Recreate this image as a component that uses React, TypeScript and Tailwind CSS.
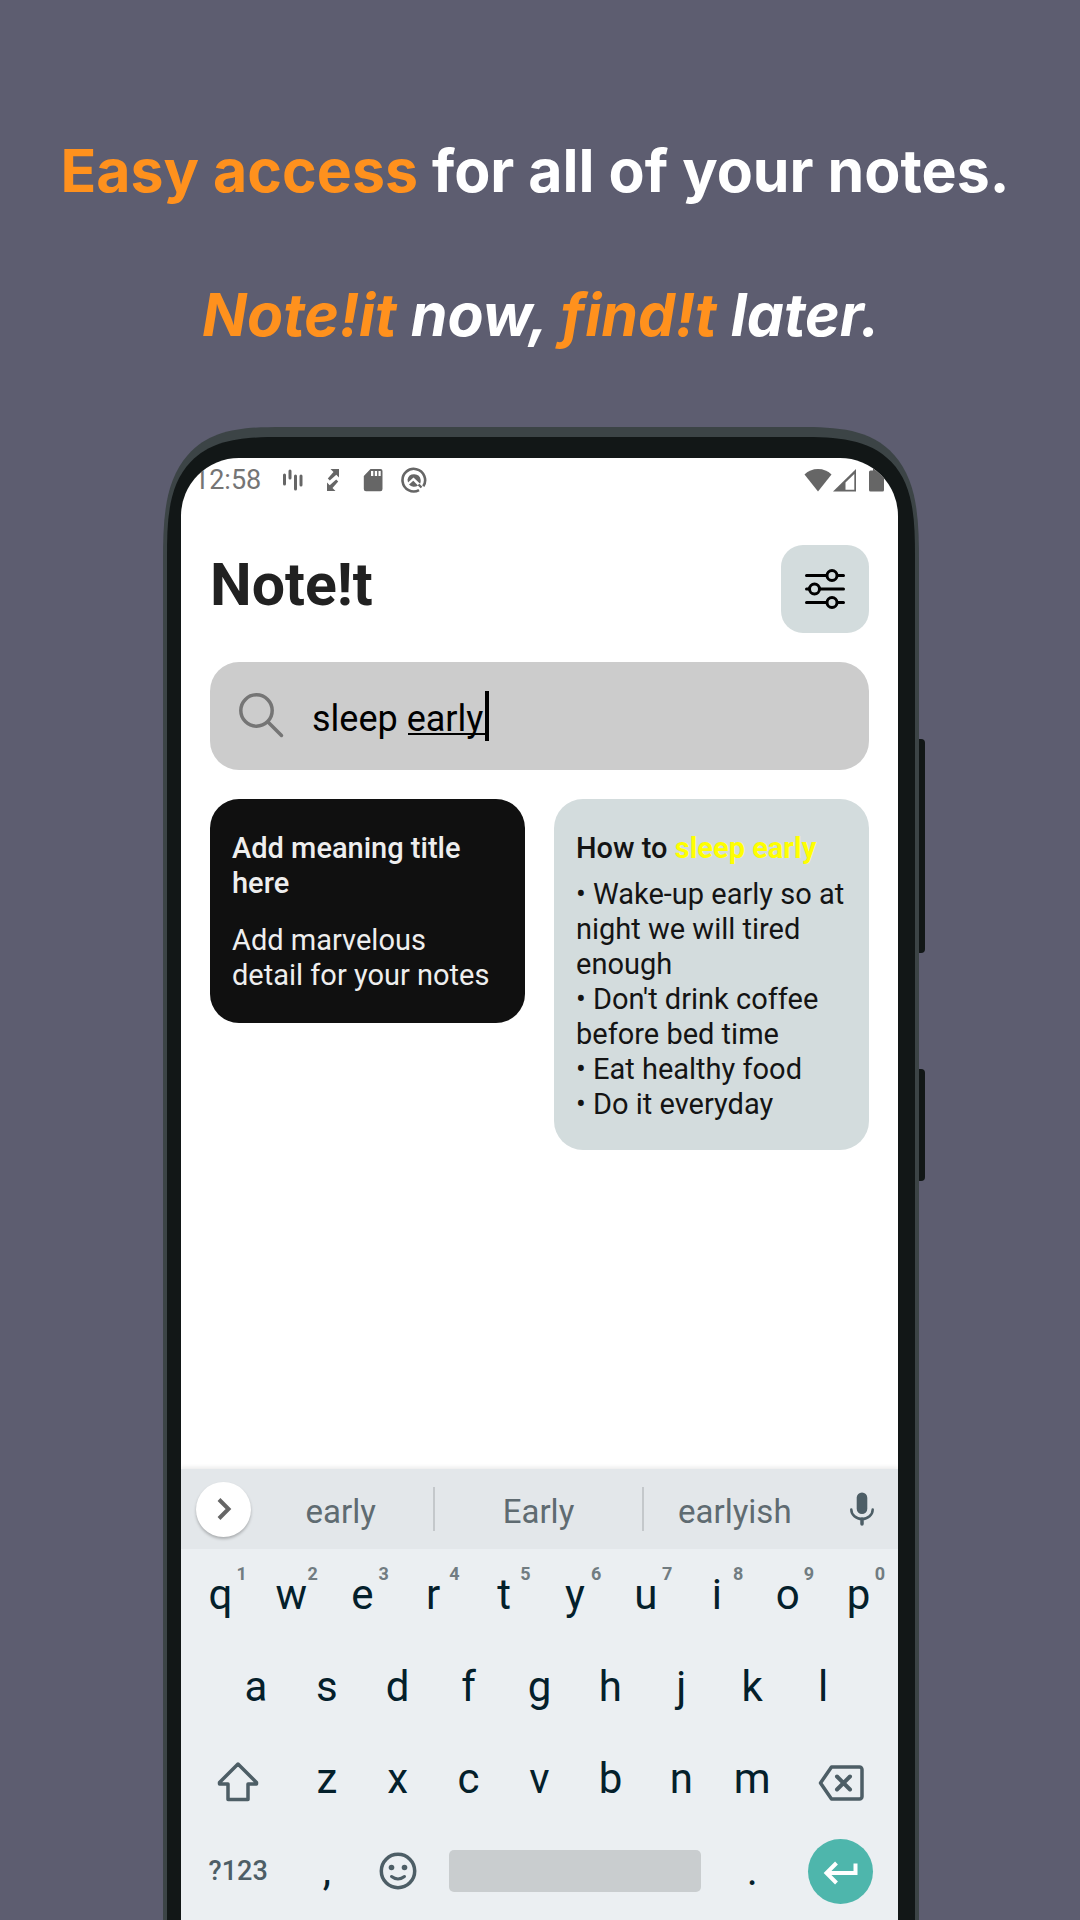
import type { ReactNode } from "react";

const numberRow = [
  ["q", "1"], ["w", "2"], ["e", "3"], ["r", "4"], ["t", "5"],
  ["y", "6"], ["u", "7"], ["i", "8"], ["o", "9"], ["p", "0"],
];

function Headline() {
  return (
    <h1 className="mx-auto flex flex-col gap-[72px] text-center font-['Inter',sans-serif] text-[59px] leading-[72px] font-bold whitespace-pre text-white">
      <span>
        <span className="text-[#ff911d]">Easy access</span> for all of your notes.{" "}
      </span>
      <em>
        <span className="text-[#ff911d]">Note!it</span> now, <span className="text-[#ff911d]">find!t</span> later.
      </em>
    </h1>
  );
}

function StatusBar() {
  return (
    <div className="flex h-11 items-center justify-between pr-[14px] pl-[13px] text-[#666666]">
      <div className="flex items-center gap-4">
        <span className="mr-1 text-[27px] leading-8 text-[#757575]">12:58</span>
        <svg className="h-6 w-6" viewBox="0 0 24 24" stroke="currentColor" strokeWidth="3" strokeLinecap="round" fill="none">
          <path d="M3.500 7v9M9 3v7M14.500 8v13M20 8v9" />
        </svg>
        <svg className="h-6 w-6" viewBox="0 0 24 24" fill="currentColor">
          <path d="M9.500 1h8.500v8.500l-2.700-2.700-6.500 5.700-2-2 5.700-6.500zM14.500 23H6v-8.500l2.700 2.700 6.500-5.700 2 2-5.700 6.500z" />
        </svg>
        <svg className="h-6 w-6" viewBox="0 0 24 24" fill="currentColor">
          <path fillRule="evenodd" d="M9.500 1H19.500a2 2 0 0 1 2 2V21a2.200 2.200 0 0 1-2.200 2.200H5a2.200 2.200 0 0 1-2.200-2.200V8zM10 3v5h2.300V3zM13.800 3v5h2.300V3zM17.500 3v5h2.200V3z" />
        </svg>
        <svg className="h-[26px] w-[26px]" viewBox="0 0 26 26" fill="none" stroke="currentColor">
          <path d="M18 23.200A11.300 11.300 0 1 1 22.300 19.300" strokeWidth="2.600" />
          <path d="M6.500 12.500a6.700 6.700 0 0 1 13.200 0.500c.100 1.300 0 2.500-.600 3.800l-6.600-6.300-5.500 5z" fill="currentColor" stroke="none" />
          <path d="M8 17.500l4.300-3.800 4.700 4.700A6.900 6.900 0 0 1 8 17.500z" fill="currentColor" stroke="none" />
          <path d="M17.500 17.500l3 3" strokeWidth="2.400" />
        </svg>
      </div>
      <div className="flex items-center">
        <svg className="h-6 w-7" viewBox="0 0 28 24" fill="currentColor">
          <path d="M14 23.500L.5 6.500Q6 1 14 1t13.500 5.500z" />
        </svg>
        <svg className="ml-px h-6 w-6" viewBox="0 0 24 24">
          <path d="M0 23.500L23 1v22.500z" fill="currentColor" />
          <path d="M12.500 14.500L21.300 6v15.800h-8.800z" fill="#fff" />
        </svg>
        <svg className="ml-3 h-6 w-[15px]" viewBox="0 0 15 24" fill="currentColor">
          <path d="M4 0h7v2.500h2.500a1.500 1.500 0 0 1 1.500 1.500v18a1.500 1.500 0 0 1-1.500 1.500h-12A1.500 1.500 0 0 1 0 22V4a1.500 1.500 0 0 1 1.500-1.500H4z" />
        </svg>
      </div>
    </div>
  );
}

function SearchBox() {
  return (
    <label className="relative flex h-[108px] items-center rounded-[29px] bg-[#cccccc] pr-6 pl-7">
      <svg className="h-12 w-12 shrink-0" viewBox="0 0 48 48" fill="none" stroke="#757575" strokeWidth="3.500" strokeLinecap="round">
        <circle cx="18.500" cy="18.500" r="15.700" />
        <path d="M30 30l13.500 13.500" />
      </svg>
      <input
        type="text"
        aria-label="Search notes"
        defaultValue="sleep early"
        className="ml-[26px] h-14 w-full min-w-0 bg-transparent pt-[6px] text-[36px] text-black outline-none"
      />
      <span className="absolute top-[71px] left-[198px] h-[2px] w-[79px] bg-black" />
      <span className="absolute top-[29px] left-[275px] h-[50px] w-1 bg-black" />
    </label>
  );
}

function Notes() {
  return (
    <div className="grid grid-cols-2 items-start gap-[29px] text-[29px] leading-[35px]">
      <article className="rounded-[29px] bg-[#101010] px-[22px] pt-8 pb-[30px] text-[#eeeeee]">
        <h3 className="font-medium">Add meaning title here</h3>
        <p className="mt-[22px]">Add marvelous detail for your notes</p>
      </article>
      <article className="rounded-[29px] bg-[#d3dcdd] px-[22px] pt-8 pb-7 text-[#141414]">
        <h3 className="font-medium">
          How to <mark className="bg-transparent font-bold text-[#ffff00]">sleep early</mark>
        </h3>
        <ul className="mt-[11px]">
          <li>• Wake-up early so at night we will tired enough</li>
          <li>• Don't drink coffee before bed time</li>
          <li>• Eat healthy food</li>
          <li>• Do it everyday</li>
        </ul>
      </article>
    </div>
  );
}

function Key({ children, hint, label }: { children: ReactNode; hint?: string; label?: string }) {
  return (
    <button type="button" aria-label={label} className="relative flex h-full flex-1 items-center justify-center">
      {children}
      {hint && (
        <span className="absolute top-[15px] right-[9px] text-[18px] leading-5 font-bold text-[#717c81]">{hint}</span>
      )}
    </button>
  );
}

function WideKey({ children, label }: { children: ReactNode; label?: string }) {
  return (
    <button type="button" aria-label={label} className="flex h-full flex-[1.5] items-center justify-center text-[#4d5e66]">
      {children}
    </button>
  );
}

function Suggestions() {
  return (
    <div className="grid h-20 grid-cols-[67px_187fr_208fr_182fr_72px] items-center bg-[#e3e7ea] text-[33px] text-[#5f6b71]">
      <button type="button" aria-label="More" className="ml-[15px] flex h-[55px] w-[55px] items-center justify-center rounded-full bg-white shadow-[0_2px_3px_rgba(0,0,0,0.25)]">
        <svg className="h-6 w-6" viewBox="0 0 24 24" fill="none" stroke="#666666" strokeWidth="4">
          <path d="M7 2.500L16.500 12 7 21.500" />
        </svg>
      </button>
      <button type="button" className="h-11 border-r-2 border-[#c4c8cb]">early</button>
      <button type="button" className="h-11 border-r-2 border-[#c4c8cb]">Early</button>
      <button type="button" className="h-11">earlyish</button>
      <button type="button" aria-label="Voice input" className="flex items-center justify-center">
        <svg className="h-9 w-7" viewBox="0 0 28 36" fill="none" stroke="#4d5e66" strokeWidth="2.500" strokeLinecap="round">
          <rect x="8.700" y="1.500" width="10.600" height="21.500" rx="5.300" fill="#4d5e66" stroke="none" />
          <path d="M3.300 18.500a10.700 9.500 0 0 0 21.400 0" />
          <path d="M14 28v5" strokeWidth="3.500" />
        </svg>
      </button>
    </div>
  );
}

function Keyboard() {
  return (
    <section aria-label="Keyboard" className="mt-auto bg-[#ebeff2] pb-[3px] text-[42px] leading-[50px] text-[#04202b] shadow-[0_-2px_4px_rgba(0,0,0,0.08)]">
      <Suggestions />
      <div className="px-1">
        <div className="flex h-[92px]">
          {numberRow.map(([key, hint]) => (
            <Key key={key} hint={hint}>{key}</Key>
          ))}
        </div>
        <div className="flex h-[92px] px-[5%]">
          {"asdfghjkl".split("").map((key) => (
            <Key key={key}>{key}</Key>
          ))}
        </div>
        <div className="flex h-[92px]">
          <WideKey label="Shift">
            <svg className="mt-1 h-11 w-11" viewBox="0 0 44 44" fill="none" stroke="currentColor" strokeWidth="3.500" strokeLinejoin="round">
              <path d="M22 5L3.500 23.500v1.500H12v15.500h20V25h8.500v-1.500z" />
            </svg>
          </WideKey>
          {"zxcvbnm".split("").map((key) => (
            <Key key={key}>{key}</Key>
          ))}
          <WideKey label="Delete">
            <svg className="mt-2 h-10 w-12" viewBox="0 0 48 40" fill="none" stroke="currentColor" strokeWidth="3.500" strokeLinejoin="round" strokeLinecap="round">
              <path d="M14.500 4H42.500a2.500 2.500 0 0 1 2.500 2.500V33.500a2.500 2.500 0 0 1-2.500 2.500H14.500L3.500 20z" />
              <path d="M20 13.500l13 13M33 13.500l-13 13" strokeWidth="4" />
            </svg>
          </WideKey>
        </div>
        <div className="flex h-[92px]">
          <WideKey>
            <span className="text-[27px] font-medium">?123</span>
          </WideKey>
          <Key>,</Key>
          <Key label="Emoji">
            <svg className="h-[38px] w-[38px]" viewBox="0 0 38 38" fill="none" stroke="#4d5e66" strokeWidth="3.500" strokeLinecap="round">
              <circle cx="19" cy="19" r="16.700" />
              <path d="M12.500 24.500q6.500 5 13 0" strokeWidth="3" />
              <circle cx="12.500" cy="15.500" r="2.800" fill="#4d5e66" stroke="none" />
              <circle cx="25.500" cy="15.500" r="2.800" fill="#4d5e66" stroke="none" />
            </svg>
          </Key>
          <div className="flex flex-[4] items-center">
            <button type="button" aria-label="Space" className="mx-4 h-[42px] flex-1 rounded-[5px] bg-[#c9cdcf]" />
          </div>
          <Key>.</Key>
          <WideKey label="Enter">
            <span className="flex h-[65px] w-[65px] items-center justify-center rounded-full bg-[#4eb6ac]">
              <svg className="h-9 w-9" viewBox="0 0 36 36" fill="none" stroke="#fff" strokeWidth="4">
                <path d="M32.500 10.500V20H3.500M13.500 10l-10 10 10 10" />
              </svg>
            </span>
          </WideKey>
        </div>
      </div>
    </section>
  );
}

export default function App() {
  return (
    <main className="flex h-screen min-h-[1560px] flex-col overflow-hidden bg-[#5d5d70] pt-[135px] pl-[2px] font-['Roboto',sans-serif]">
      <Headline />
      <div className="relative mx-auto mt-[76px] flex w-[70vw] flex-1 flex-col">
        <span className="absolute top-[312px] -right-[6px] h-[214px] w-3 rounded-r-[4px] bg-[#121717]" />
        <span className="absolute top-[642px] -right-[6px] h-[112px] w-3 rounded-r-[4px] bg-[#121717]" />
        <div className="relative flex flex-1 flex-col bg-[#3c4446] px-1 pt-[10px] [border-top-left-radius:78px_100px] [border-top-right-radius:78px_100px] supports-[corner-shape:squircle]:[border-top-left-radius:120px_135px] supports-[corner-shape:squircle]:[border-top-right-radius:120px_135px] [corner-shape:superellipse(1.58)]">
          <div className="flex flex-1 flex-col bg-[#121717] pt-[21px] pr-[17px] pl-[14px] [border-top-left-radius:76px_86px] [border-top-right-radius:76px_86px] supports-[corner-shape:squircle]:[border-top-left-radius:115px_120px] supports-[corner-shape:squircle]:[border-top-right-radius:115px_120px] [corner-shape:superellipse(1.58)]">
            <div className="flex flex-1 flex-col overflow-hidden rounded-t-[58px] bg-white">
              <StatusBar />
              <div className="flex flex-col gap-[29px] px-[29px] pt-[43px]">
                <header className="flex items-start justify-between">
                  <h2 className="text-[59px] leading-[80px] font-bold text-[#212121]">Note!t</h2>
                  <button type="button" aria-label="Filter notes" className="flex h-[88px] w-[88px] items-center justify-center rounded-[22px] bg-[#d3dcdd]">
                    <svg className="h-11 w-11" viewBox="0 0 44 44" fill="#d3dcdd" stroke="#000" strokeWidth="3" strokeLinecap="round">
                      <path d="M3.500 8.500h37M3.500 22h37M3.500 35.500h37" />
                      <circle cx="29" cy="8.500" r="5" />
                      <circle cx="11.500" cy="22" r="5" />
                      <circle cx="29" cy="35.500" r="5" />
                    </svg>
                  </button>
                </header>
                <SearchBox />
                <Notes />
              </div>
              <Keyboard />
            </div>
          </div>
        </div>
      </div>
    </main>
  );
}
